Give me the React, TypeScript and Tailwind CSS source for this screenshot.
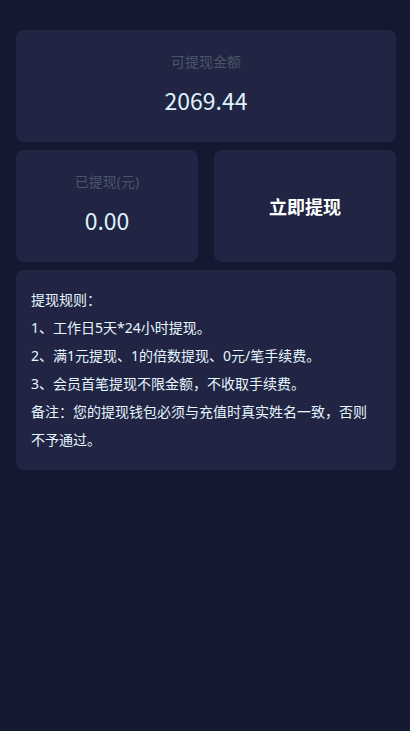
const rules = [
  "提现规则：",
  "1、工作日5天*24小时提现。",
  "2、满1元提现、1的倍数提现、0元/笔手续费。",
  "3、会员首笔提现不限金额，不收取手续费。",
  "备注：您的提现钱包必须与充值时真实姓名一致，否则不予通过。",
];

function Stat({ label, value }: { label: string; value: string }) {
  return (
    <section className="flex h-28 flex-col items-center rounded-lg bg-[#212543] pt-4">
      <h2 className="text-sm leading-8 text-[#4a5567]">{label}</h2>
      <p className="font-['Noto_Sans_CJK_SC',sans-serif] text-[23px] leading-11 text-[#dff2fc]">
        {value}
      </p>
    </section>
  );
}

export default function App() {
  return (
    <main className="min-h-screen bg-[#141932] pt-[30px] pr-[14px] pl-4 font-['Noto_Sans','Noto_Sans_CJK_SC',sans-serif]">
      <div className="flex flex-col gap-2">
        <Stat label="可提现金额" value="2069.44" />
        <div className="grid grid-cols-2 gap-4">
          <Stat label="已提现(元)" value="0.00" />
          <button
            type="button"
            className="h-28 rounded-lg bg-[#212543] pt-0.5 text-lg font-bold text-white"
          >
            立即提现
          </button>
        </div>
        <section className="rounded-lg bg-[#212543] py-4 pr-4 pl-[15px] text-sm leading-7 text-[#e6f6ff]">
          {rules.map((rule) => (
            <p key={rule}>{rule}</p>
          ))}
        </section>
      </div>
    </main>
  );
}
